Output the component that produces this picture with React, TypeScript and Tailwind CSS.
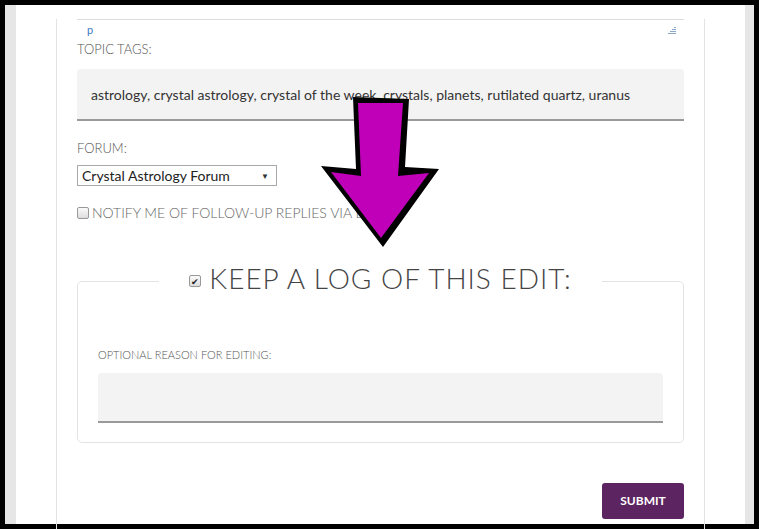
import React from 'react';

const lato = { fontFamily: 'Lato, "Open Sans", sans-serif' };

const Arrow = () => (
  <svg className="absolute left-0 top-0 pointer-events-none" width="759" height="529" viewBox="0 0 759 529">
    <polygon points="353,97 409,99 405,167 439,169 383,247 321,166 356,169" fill="#000" />
    <polygon points="358,103 403,103 398,176 429,173 381,238 331,172 361,176" fill="#c000b9" />
  </svg>
);

export default function App() {
  return (
    <div className="relative w-[759px] h-[529px] overflow-hidden bg-black p-[5px]" style={lato}>
      <div className="flex h-full bg-[#e6e6e6] pl-[11px] pr-[9px]">
        <div className="flex-1 bg-white px-[40px]">
          <div className="h-full border-x border-[#e3e3e3] px-[20px]">
            <div className="mt-[14px] border-t border-[#dcdcdc]">
              <div className="flex h-[18px] items-center justify-between pl-[10px] pr-[8px] pt-[2px]">
                <span className="text-[11px] text-[#3a7bbf]">p</span>
                <svg width="8" height="9" viewBox="0 0 8 9">
                  <g fill="#8aa9c8">
                    <rect x="6" y="1" width="2" height="1" />
                    <rect x="4" y="3" width="4" height="1" />
                    <rect x="2" y="5" width="6" height="1" />
                    <rect x="0" y="7" width="8" height="1" />
                  </g>
                </svg>
              </div>
            </div>
            <div className="mt-[2px] text-[13px] font-light leading-[18px] text-[#555]">TOPIC TAGS:</div>
            <div className="mt-[11px] flex h-[52px] items-center rounded-t-[4px] border-b-2 border-[#9a9a9a] bg-[#f3f3f3] px-[14px] text-[14px] text-[#333]">
              astrology, crystal astrology, crystal of the week, crystals, planets, rutilated quartz, uranus
            </div>
            <div className="mt-[18px] text-[13px] font-light leading-[18px] text-[#555]">FORUM:</div>
            <div className="mt-[8px] flex h-[21px] w-[200px] items-center justify-between border border-[#a9a9a9] bg-white pl-[4px] pr-[7px] text-[14px] text-[#222]">
              <span>Crystal Astrology Forum</span>
              <span className="text-[8px] text-[#333]">▼</span>
            </div>
            <div className="mt-[16px] flex items-center gap-[3px] text-[14px] font-light text-[#666]">
              <span className="h-[12px] w-[12px] rounded-[2px] border border-[#999] bg-gradient-to-b from-[#fafafa] to-[#ddd]" />
              <span>NOTIFY ME OF FOLLOW-UP REPLIES VIA EMAIL</span>
            </div>
            <fieldset className="mt-[38px] h-[182px] rounded-[5px] border border-[#e3e3e3] px-[20px]">
              <legend className="mx-auto flex items-center gap-[8px] px-[30px] pb-[6px]">
                <span className="mt-[6px] flex h-[12px] w-[12px] items-center justify-center rounded-[2px] border border-[#999] bg-gradient-to-b from-[#fafafa] to-[#ddd] text-[9px] leading-none text-[#222]">✔</span>
                <span className="text-[28px] font-light leading-[34px] tracking-[1px] text-[#444]">KEEP A LOG OF THIS EDIT:</span>
              </legend>
              <div className="mt-[47px] text-[11px] font-light leading-[14px] text-[#555]">OPTIONAL REASON FOR EDITING:</div>
              <div className="mt-[11px] h-[50px] rounded-t-[4px] border-b-2 border-[#9a9a9a] bg-[#f3f3f3]" />
            </fieldset>
            <div className="mt-[40px] flex justify-end">
              <button className="h-[36px] w-[82px] rounded-[3px] bg-[#5c2461] text-[12px] font-bold text-white">SUBMIT</button>
            </div>
          </div>
        </div>
      </div>
      <Arrow />
    </div>
  );
}
